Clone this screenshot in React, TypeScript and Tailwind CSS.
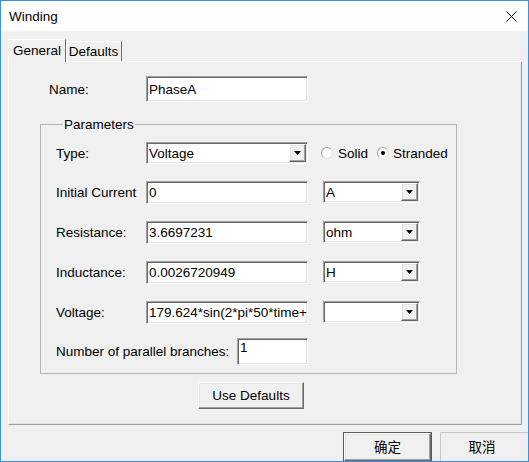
import React from 'react';

const sunken =
  'bg-white border border-t-[#a0a0a0] border-l-[#a0a0a0] border-r-[#ffffff] border-b-[#ffffff] shadow-[inset_1px_1px_0_#696969,inset_-1px_-1px_0_#e3e3e3]';
const raised =
  'bg-[#f0f0f0] border border-t-[#ffffff] border-l-[#ffffff] border-r-[#696969] border-b-[#696969] shadow-[inset_-1px_-1px_0_#a0a0a0,inset_1px_1px_0_#e3e3e3]';

function Arrow() {
  return (
    <svg width="7" height="4" viewBox="0 0 7 4">
      <path d="M0 0h7L3.5 4z" fill="#000" />
    </svg>
  );
}

function TextField({ value, className = '' }: { value: string; className?: string }) {
  return (
    <div className={`${sunken} flex items-center pl-[2px] overflow-hidden whitespace-nowrap ${className}`}>
      {value}
    </div>
  );
}

function Combo({ value, className = '' }: { value: string; className?: string }) {
  return (
    <div className={`${sunken} flex items-stretch p-[1px] ${className}`}>
      <div className="flex-1 flex items-center pl-[1px] overflow-hidden whitespace-nowrap">{value}</div>
      <div className={`${raised} w-[17px] flex items-center justify-center`}>
        <Arrow />
      </div>
    </div>
  );
}

function Radio({ checked }: { checked?: boolean }) {
  return (
    <div className="w-[12px] h-[12px] rounded-full bg-white border border-t-[#a0a0a0] border-l-[#a0a0a0] border-r-[#e3e3e3] border-b-[#e3e3e3] flex items-center justify-center">
      {checked && <div className="w-[4px] h-[4px] rounded-full bg-black" />}
    </div>
  );
}

function Row({ label, children, className = '' }: { label: string; children: React.ReactNode; className?: string }) {
  return (
    <div className={`flex items-center h-[22px] ${className}`}>
      <div className="w-[90px] whitespace-nowrap">{label}</div>
      {children}
    </div>
  );
}

export default function App() {
  return (
    <div className="w-[529px] h-[462px] flex flex-col border border-[#3f8fdf] bg-[#f0f0f0] text-[13.5px] leading-[15px] text-black font-['Liberation_Sans','Noto_Sans_CJK_SC',sans-serif]">
      <div className="h-[30px] shrink-0 bg-white flex items-center justify-between pl-[8px] pr-[11px]">
        <span className="text-[13.5px]">Winding</span>
        <svg width="11" height="11" viewBox="0 0 11 11">
          <path d="M0.5 0.5l10 10M10.5 0.5l-10 10" stroke="#000" strokeWidth="1" />
        </svg>
      </div>

      <div className="flex-1 flex flex-col overflow-hidden pl-[7px] pt-[9px]">
        <div className="flex items-end h-[22px] -mb-[1px] relative z-10">
          <div className="h-[23px] w-[58px] bg-[#f0f0f0] border-t border-l border-r border-t-[#ffffff] border-l-[#ffffff] border-r-[#696969] flex items-center justify-center pb-[2px]">
            General
          </div>
          <div className="h-[20px] w-[56px] bg-[#f0f0f0] border-t border-r border-t-[#ffffff] border-r-[#696969] shadow-[inset_1px_0_0_#ffffff] flex items-center justify-center mb-[1px]">
            Defaults
          </div>
        </div>

        <div className="w-[514px] h-[364px] shrink-0 flex flex-col border border-t-[#ffffff] border-l-[#ffffff] border-r-[#a0a0a0] border-b-[#a0a0a0] shadow-[inset_-1px_-1px_0_#e3e3e3]">
          <div className="flex items-center mt-[14px] ml-[40px] h-[26px]">
            <div className="w-[97px]">Name:</div>
            <TextField value="PhaseA" className="w-[162px] h-[26px]" />
          </div>

          <fieldset className="mt-[15px] ml-[31px] w-[417px] border border-[#b6b6b6] pl-[15px] pt-[10px] pb-[8px]">
            <legend className="ml-[7px] px-[1px] leading-[15px]">Parameters</legend>

            <Row label="Type:">
              <Combo value="Voltage" className="w-[162px] h-[22px]" />
              <div className="flex items-center ml-[13px]">
                <Radio />
                <span className="ml-[5px]">Solid</span>
              </div>
              <div className="flex items-center ml-[9px]">
                <Radio checked />
                <span className="ml-[4px]">Stranded</span>
              </div>
            </Row>

            <Row label="Initial Current" className="mt-[17px]">
              <TextField value="0" className="w-[162px] h-[23px]" />
              <Combo value="A" className="w-[97px] h-[22px] ml-[15px]" />
            </Row>

            <Row label="Resistance:" className="mt-[18px]">
              <TextField value="3.6697231" className="w-[162px] h-[23px]" />
              <Combo value="ohm" className="w-[97px] h-[22px] ml-[15px]" />
            </Row>

            <Row label="Inductance:" className="mt-[18px]">
              <TextField value="0.0026720949" className="w-[162px] h-[23px]" />
              <Combo value="H" className="w-[97px] h-[22px] ml-[15px]" />
            </Row>

            <Row label="Voltage:" className="mt-[18px]">
              <TextField value="179.624*sin(2*pi*50*time+" className="w-[162px] h-[23px]" />
              <Combo value="" className="w-[97px] h-[22px] ml-[15px]" />
            </Row>

            <div className="flex items-center h-[27px] mt-[15px]">
              <div className="w-[181px] whitespace-nowrap">Number of parallel branches:</div>
              <div className={`${sunken} w-[71px] h-[27px] pl-[2px] pt-[1px]`}>1</div>
            </div>
          </fieldset>

          <div className={`${raised} mt-[8px] ml-[189px] w-[106px] h-[27px] flex items-center justify-center`}>
            Use Defaults
          </div>
        </div>

        <div className="flex mt-[7px] ml-[335px]">
          <div className="w-[89px] h-[30px] shrink-0 border border-[#5a5a5a] flex">
            <div className={`${raised} flex-1 flex items-center justify-center`}>确定</div>
          </div>
          <div className="w-[89px] h-[30px] shrink-0 ml-[8px] border border-[#c8c8c8] bg-[#f0f0f0] flex items-center justify-center pr-[5px]">
            取消
          </div>
        </div>
      </div>
    </div>
  );
}
